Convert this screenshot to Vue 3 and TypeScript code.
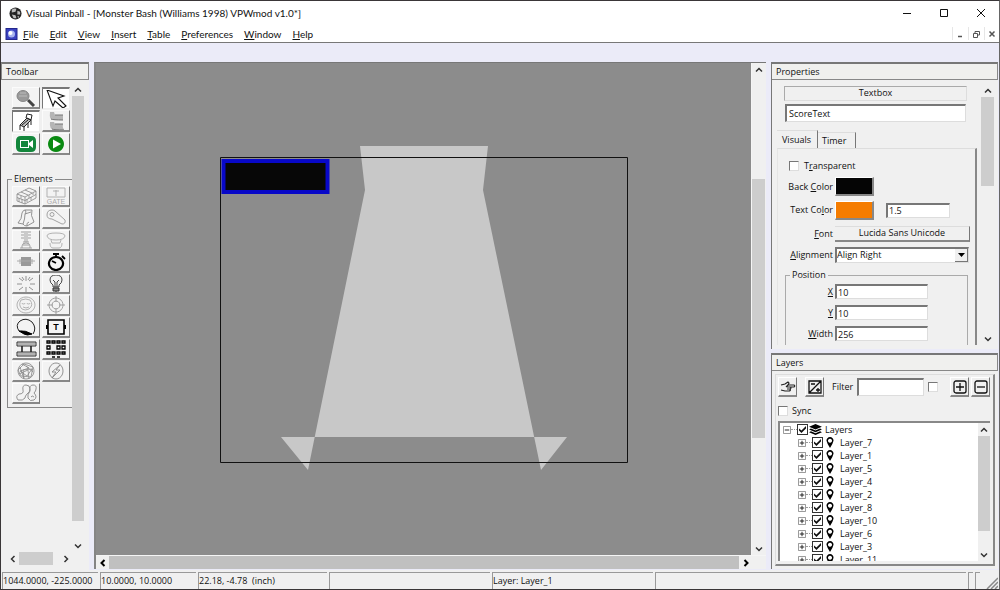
<script setup lang="ts">
import { ref } from 'vue'

interface Shape { d: string; fill?: string; stroke?: string; w?: number }
interface Tool { name: string; shapes: Shape[]; text?: string; small?: boolean; pressed?: boolean }
type Mnemonic = [string, string, string]

const menus: Mnemonic[] = [
  ['', 'F', 'ile'], ['', 'E', 'dit'], ['', 'V', 'iew'], ['', 'I', 'nsert'],
  ['', 'T', 'able'], ['', 'P', 'references'], ['', 'W', 'indow'], ['', 'H', 'elp'],
]

const modes: Tool[] = [
  { name: 'Magnify', shapes: [
    { d: 'M15 11L21 17', stroke: '#444', w: 3 },
    { d: 'M4 7a6 5.500 0 1 0 12 0a6 5.500 0 1 0-12 0', fill: '#999', stroke: '#888' },
    { d: 'M6 7h8M7 4h6', stroke: '#bbb' } ] },
  { name: 'Select', pressed: true, shapes: [
    { d: 'M4 0L21 6L15 8L23 16L20 18L12 11L10 16Z', fill: '#fff', stroke: '#111', w: 1.1 } ] },
  { name: 'Script', pressed: true, shapes: [
    { d: 'M7 12L14 5L18 7L11 14Z', fill: '#bbb', stroke: '#222' },
    { d: 'M14 1L19 2L18 7L13 5ZM7 12v5M11 14v4M18 7v5M15 10v5M9 12l6-5', stroke: '#222', w: 1, fill: 'none' } ] },
  { name: 'Backglass', shapes: [
    { d: 'M7 0h4l1 3h8v5H10q-4 0-3-8z', fill: '#b5b5b5' }, { d: 'M8 7q2 1 12 1M12 3h8', stroke: '#777' },
    { d: 'M7 10h4l1 2h8q-1 3 1 6H11q-5-1-4-8z', fill: '#b5b5b5' }, { d: 'M9 17q2 1 12 1M12 12h8', stroke: '#777' } ] },
  { name: 'Camera', shapes: [
    { d: 'M8 1h10q5 0 5 5v6q0 5-5 5H8q-5 0-5-5V6q0-5 5-5z', fill: '#13863b' },
    { d: 'M7 5h9v3l4-3v8l-4-3v3H7z', fill: '#fff' }, { d: 'M8 6h7v6H8z', fill: '#13863b' } ] },
  { name: 'Play', shapes: [
    { d: 'M13 1a8 8 0 1 0 .01 0z', fill: '#0a8a12' }, { d: 'M10 4.500L18 9L10 13.500Z', fill: '#fff' } ] },
]

const g = '#999'
const elements: Tool[] = [
  { name: 'Wall', shapes: [{ d: 'M4 7L16 1L23 4V11L12 17L4 14ZM4 7L12 10L23 4M12 10V17M4 10.500l8 3l11-6M8 8.500v3M16 8v3M20 6v2M14 12v3M18 10v3M6 11v4M9 12v4M8 5l7 3M12 3l7 3', stroke: '#888', w: 0.8 }] },
  { name: 'Gate', small: true, text: 'GATE', shapes: [{ d: 'M4 1h18v9H4zM13 3v6M10 4h6', stroke: '#aaa', w: 0.9 }] },
  { name: 'Ramp', shapes: [{ d: 'M5 14Q9 10 9 4Q10 1 12 1H19Q17 6 21 13L14 17Q11 17 10 15L5 14ZM12 1Q14 3 12 5Q12 10 10 15M12 5l6-2M14 17q-1-3 2-4', stroke: '#888', w: 0.9 }] },
  { name: 'Flipper', shapes: [{ d: 'M9 1Q4 1 4 6Q4 10 9 10L19 15Q23 15 22 11L12 2Q11 1 9 1ZM7 5.500a2 2 0 1 0 4 0a2 2 0 1 0-4 0', stroke: g, w: 0.9 }] },
  { name: 'Plunger', shapes: [{ d: 'M12 0v11M14 0v11M8 1h3M15 1h3M8 4h3M15 4h3M8 7h3M15 7h3M10 11h6M9 17v-2q0-3 4-3t4 3v2M7 17h12M10 14h6', stroke: g, w: 0.9 }] },
  { name: 'Bumper', shapes: [{ d: 'M4 5q0-3 9-3t9 3q-1 4-9 4T4 5zM8 9l1 3M18 9l-1 3M9 12h8M7 12q0 5 3 5h6q3 0 3-5', stroke: '#aaa', w: 0.9 }] },
  { name: 'Spinner', shapes: [{ d: 'M8 4h10v9H8z', fill: '#999' }, { d: 'M4 8h18M7 6v5M19 6v5', stroke: '#aaa', w: 1 }] },
  { name: 'Timer', shapes: [
    { d: 'M13 4a7 6.500 0 1 0 .01 0z', stroke: '#000', w: 2.2 }, { d: 'M10 1h6M13 1v3M19 3l3 3M13 10L9 8', stroke: '#000', w: 1.8 } ] },
  { name: 'Trigger', shapes: [{ d: 'M13 1v5M13 12v5M4 9h5M17 9h5M6 3l4 3M20 3l-4 3M6 15l4-3M20 15l-4-3M9 2l2 3M17 2l-2 3', stroke: '#888', w: 0.9 }] },
  { name: 'Light', shapes: [
    { d: 'M10 12v-2q-3-2-3-5q0-5 6-5t6 5q0 3-3 5v2zM10 5l2 2v5M16 5l-2 2v5', stroke: '#333', w: 0.9 },
    { d: 'M10 13h6v3h-6zM12 17h2', fill: '#888', stroke: '#333' } ] },
  { name: 'Kicker', shapes: [{ d: 'M13 1a9 8 0 1 0 .01 0zM8 4q5-2 9 0q4 5-1 9q-4 2-7 0q-4-4-1-9M9 7a1.500 1 0 1 0 3 0M14 7a1.500 1 0 1 0 3 0M10 11q3 2 6 0', stroke: '#aaa', w: 0.9 }] },
  { name: 'Target', shapes: [{ d: 'M13 2a7 7 0 1 0 .01 0zM13 5a4 4 0 1 0 .01 0zM13 0v6M13 12v6M4 9h6M16 9h6', stroke: g, w: 0.9 }] },
  { name: 'Decal', shapes: [
    { d: 'M6 13Q2 7 7 3Q13-1 19 4Q24 10 20 16', stroke: '#222', w: 1 },
    { d: 'M6 13Q12 12 19 16Q14 18 11 16Z', fill: '#000', stroke: '#000' } ] },
  { name: 'Textbox', text: 'T', shapes: [
    { d: 'M5 2h16v14H5z', stroke: '#000', w: 1.6 }, { d: 'M4 7v4M22 7v4', stroke: '#000', w: 2 } ] },
  { name: 'Reel', shapes: [
    { d: 'M4 2h19v4H4zM4 12h19v4H4z', fill: '#ddd', stroke: '#333', w: 1 },
    { d: 'M4 4h19M4 14h19', stroke: '#888', w: 1 },
    { d: 'M9 6v6M18 6v6', stroke: '#222', w: 1.6 } ] },
  { name: 'Light sequencer', shapes: [
    { d: 'M4 1h3v2H4zM9 1h3v2H9zM14 1h3v2h-3zM19 1h3v2h-3zM4 6h3v3H4zM14 6h3v3h-3zM19 6h3v3h-3zM4 12h3v2H4zM9 12h3v2H9zM14 12h3v2h-3zM19 12h3v2h-3zM9 17h3M14 17h3', stroke: '#000', w: 1.3 } ] },
  { name: 'Primitive', shapes: [
    { d: 'M13 1a8 8 0 1 0 .01 0zM9 2l7 4l-9 3l7 5l5-7l-9 1l1 8M5 8l6-6l9 3l-2 10l-10-1zM13 4l7 6M6 12l9-4l1 9M7 5l4 12', stroke: '#888', w: 0.8 } ] },
  { name: 'Flasher', shapes: [{ d: 'M13 1a7 8 0 1 0 .01 0zM17 3L9 10h4L9 16L17 8h-4Z', stroke: '#888', w: 0.9 }] },
  { name: 'Rubber', shapes: [
    { d: 'M5 16q-3-4 1-6q5 0 4-4q-1-5 3-5t4 4q0 3-3 5q-2 2-2 4q-2 3-7 2zM17 7q-1-6 3-6t3 4q0 2-2 4q4 4 0 7q-4 2-6-2q-1-3 2-7zM18 13q1-2 3 0', stroke: '#888', w: 0.9 } ] },
]

const layerList = ref(
  ['7', '1', '5', '4', '2', '8', '10', '6', '3', '11'].map((n) => ({ name: `Layer_${n}`, shown: true })),
)
const allShown = ref(true)
const position = ref([
  { id: 'px', key: 'X', rest: '', value: '10' },
  { id: 'py', key: 'Y', rest: '', value: '10' },
  { id: 'pw', key: 'W', rest: 'idth', value: '256' },
])
const elementName = ref('ScoreText')
const textScale = ref('1.5')
const filter = ref('')
</script>

<template>
  <div class="window">
    <header class="titlebar">
      <svg class="app-icon" viewBox="0 0 14 14" aria-hidden="true">
        <circle cx="7" cy="7" r="6.500" fill="#222" />
        <path d="M3 3q2-2 5-1l-1 3-4 1zM9 4l3 1 0 3-3 0zM3 8l4 1 1 3-3 0zM9 10l2 0-1 2z" fill="#bbb" />
      </svg>
      <h1>Visual Pinball - [Monster Bash (Williams 1998) VPWmod v1.0*]</h1>
      <div class="win-buttons">
        <button aria-label="Minimize"><svg viewBox="0 0 10 10"><path d="M1 5.500h8" /></svg></button>
        <button aria-label="Maximize"><svg viewBox="0 0 10 10"><path d="M1.500 1.500h7v7h-7z" /></svg></button>
        <button aria-label="Close"><svg viewBox="0 0 10 10"><path d="M1 1l8 8M9 1l-8 8" /></svg></button>
      </div>
    </header>

    <nav class="menubar">
      <svg class="doc-icon" viewBox="0 0 12 12" aria-hidden="true">
        <rect width="12" height="12" fill="#23268c" /><rect x="1" y="1" width="10" height="10" fill="#3a42c0" />
        <circle cx="6" cy="6" r="3.500" fill="#a9b4ee" /><circle cx="5" cy="5" r="2" fill="#fff" />
      </svg>
      <button v-for="m in menus" :key="m[1]">{{ m[0] }}<u>{{ m[1] }}</u>{{ m[2] }}</button>
      <div class="mdi-buttons">
        <button aria-label="Minimize table"><svg viewBox="0 0 10 10"><path d="M3 7.500h4" stroke-width="1.500" /></svg></button>
        <button aria-label="Restore table"><svg viewBox="0 0 10 10"><path d="M2.500 4.500h4v4h-4zM4 4V2.500h4.500V6H7" /></svg></button>
        <button aria-label="Close table"><svg viewBox="0 0 10 10"><path d="M2.500 2.500l5 5M7.500 2.500l-5 5" stroke-width="1.500" /></svg></button>
      </div>
    </nav>

    <div class="workspace">
      <aside class="dock toolbar">
        <h2>Toolbar</h2>
        <div class="tool-body">
          <div class="tool-main">
            <div class="tools">
              <div class="grid modes">
                <button v-for="t in modes" :key="t.name" :aria-label="t.name" :class="{ pressed: t.pressed }">
                  <svg viewBox="0 0 26 18"><path v-for="(s, i) in t.shapes" :key="i" :d="s.d" :fill="s.fill ?? 'none'" :stroke="s.stroke ?? 'none'" :stroke-width="s.w ?? 1" /></svg>
                </button>
              </div>
              <fieldset class="elements">
                <legend>Elements</legend>
                <div class="grid parts">
                  <button v-for="t in elements" :key="t.name" :aria-label="t.name">
                    <svg viewBox="0 0 26 18">
                      <path v-for="(s, i) in t.shapes" :key="i" :d="s.d" :fill="s.fill ?? 'none'" :stroke="s.stroke ?? 'none'" :stroke-width="s.w ?? 1" />
                      <text v-if="t.text" x="13" :y="t.small ? 17 : 12" text-anchor="middle" :class="t.small ? 'gate' : 'tee'">{{ t.text }}</text>
                    </svg>
                  </button>
                </div>
              </fieldset>
            </div>
            <div class="scroll vertical">
              <button aria-label="Scroll up"><svg viewBox="0 0 8 8"><path d="M1 5.500L4 2.500L7 5.500" /></svg></button>
              <div class="track"><div class="thumb tool-thumb"></div></div>
              <button aria-label="Scroll down"><svg viewBox="0 0 8 8"><path d="M1 2.500L4 5.500L7 2.500" /></svg></button>
            </div>
          </div>
          <div class="scroll horizontal">
            <button aria-label="Scroll left"><svg viewBox="0 0 8 8"><path d="M5.500 1L2.500 4L5.500 7" /></svg></button>
            <div class="track"><div class="thumb side-thumb"></div></div>
            <button aria-label="Scroll right"><svg viewBox="0 0 8 8"><path d="M2.500 1L5.500 4L2.500 7" /></svg></button>
          </div>
        </div>
      </aside>

      <main class="editor">
        <div class="editor-main">
          <svg class="canvas" role="img" aria-label="Table backglass">
            <polygon points="264,83 392,83 387,127 445,407 471,374 185,374 212,407 269,127" fill="#c8c8c8" fill-rule="evenodd" />
            <path d="M124.500 94.500H531.500V399.500H124.500Z" fill="none" stroke="#111" />
            <rect x="127.500" y="98" width="104" height="31" fill="#070707" stroke="#0808c8" stroke-width="4" />
          </svg>
          <div class="scroll vertical">
            <button aria-label="Scroll up"><svg viewBox="0 0 8 8"><path d="M1 5.500L4 2.500L7 5.500" /></svg></button>
            <div class="track"><div class="before"></div><div class="thumb editor-thumb"></div><div class="after"></div></div>
            <button aria-label="Scroll down"><svg viewBox="0 0 8 8"><path d="M1 2.500L4 5.500L7 2.500" /></svg></button>
          </div>
        </div>
        <div class="scroll horizontal">
          <button aria-label="Scroll left"><svg viewBox="0 0 8 8"><path d="M5.500 1L2.500 4L5.500 7" /></svg></button>
          <div class="track"><div class="thumb full"></div></div>
          <button aria-label="Scroll right"><svg viewBox="0 0 8 8"><path d="M2.500 1L5.500 4L2.500 7" /></svg></button>
        </div>
      </main>

      <aside class="right">
        <section class="dock properties">
          <h2>Properties</h2>
          <div class="prop-body">
            <div class="prop-main">
              <div class="kind">Textbox</div>
              <input v-model="elementName" class="field name" aria-label="Name" />
              <div class="tabs" role="tablist">
                <button role="tab" aria-selected="true" class="active">Visuals</button>
                <button role="tab" aria-selected="false">Timer</button>
              </div>
              <div class="pane">
                <div class="row check-row"><input id="tr" type="checkbox" /><label for="tr">T<u>r</u>ansparent</label></div>
                <div class="row"><label for="bc">Back <u>C</u>olor</label><button id="bc" class="swatch black" aria-label="Back color"></button></div>
                <div class="row tall"><label for="tc">Text Co<u>l</u>or</label><button id="tc" class="swatch orange" aria-label="Text color"></button><input v-model="textScale" class="field scale" aria-label="Text scale" /></div>
                <div class="row"><label for="fo"><u>F</u>ont</label><button id="fo" class="font-button">Lucida Sans Unicode</button></div>
                <div class="row"><label for="al"><u>A</u>lignment</label>
                  <div class="select"><select id="al"><option>Align Right</option><option>Align Left</option><option>Align Center</option></select><span><svg viewBox="0 0 7 4"><path d="M0 0h7L3.500 4z" /></svg></span></div>
                </div>
                <fieldset class="position">
                  <legend>Position</legend>
                  <div v-for="p in position" :key="p.id" class="pos-row">
                    <label :for="p.id"><u>{{ p.key }}</u>{{ p.rest }}</label><input :id="p.id" v-model="p.value" class="field" />
                  </div>
                </fieldset>
              </div>
            </div>
            <div class="scroll vertical">
              <button aria-label="Scroll up"><svg viewBox="0 0 8 8"><path d="M1 5.500L4 2.500L7 5.500" /></svg></button>
              <div class="track"><div class="thumb prop-thumb"></div></div>
              <button aria-label="Scroll down"><svg viewBox="0 0 8 8"><path d="M1 2.500L4 5.500L7 2.500" /></svg></button>
            </div>
          </div>
        </section>

        <section class="dock layers">
          <h2>Layers</h2>
          <div class="layer-body">
            <div class="layer-tools">
              <button aria-label="Assign to layer"><svg viewBox="0 0 16 16"><path d="M1 6L5 5L8 3L9 4L8 6H14Q15.500 7 14 8H10M10 8Q12 9 10 10M10 10Q11 11 9.500 12H5L1 11M7 8H10M7 10H10M8 6L6 8" fill="none" stroke="#222" stroke-width="1.200" /></svg></button>
              <button aria-label="Toggle all layers"><svg viewBox="0 0 16 16"><path d="M2 2h12v12H2zM2 14L14 2M4 5h4M9 11h4M11 9v4" fill="none" stroke="#111" stroke-width="1.300" /></svg></button>
              <label for="fi">Filter</label>
              <input id="fi" v-model="filter" class="field filter" />
              <input type="checkbox" aria-label="Case sensitive filter" />
              <button class="plus" aria-label="Add layer"><svg viewBox="0 0 16 16"><rect x="2" y="2" width="12" height="12" rx="2" fill="none" stroke="#111" stroke-width="1.300" /><path d="M4 8h8M8 4v8" stroke="#111" stroke-width="1.300" /></svg></button>
              <button aria-label="Remove layer"><svg viewBox="0 0 16 16"><rect x="2" y="2" width="12" height="12" rx="2" fill="none" stroke="#111" stroke-width="1.300" /><path d="M4 8h8" stroke="#111" stroke-width="1.300" /></svg></button>
            </div>
            <div class="sync"><input id="sy" type="checkbox" /><label for="sy">Sync</label></div>
            <div class="tree-box">
              <ul class="tree">
                <li class="root">
                  <button class="expander" aria-label="Collapse Layers"><svg viewBox="0 0 9 9"><path d="M.5.5h8v8h-8z" stroke="#888" /><path d="M2 4.500h5" stroke="#111" /></svg></button>
                  <i></i><input id="all" v-model="allShown" type="checkbox" />
                  <svg class="stack" viewBox="0 0 14 12"><path d="M7 0l7 3-7 3-7-3z" /><path d="M0 6l2-1 5 2 5-2 2 1-7 3zM0 9l2-1 5 2 5-2 2 1-7 3z" /></svg>
                  <label for="all">Layers</label>
                </li>
                <li v-for="l in layerList" :key="l.name">
                  <button class="expander" :aria-label="'Expand ' + l.name"><svg viewBox="0 0 9 9"><path d="M.5.5h8v8h-8z" stroke="#888" /><path d="M2 4.500h5M4.500 2v5" stroke="#111" /></svg></button>
                  <i></i><input :id="l.name" v-model="l.shown" type="checkbox" />
                  <svg class="pin" viewBox="0 0 8 11"><path fill-rule="evenodd" d="M4 0a3.500 3.500 0 0 1 3.500 3.800Q7 6.500 4 11Q1 6.500 .5 3.800A3.500 3.500 0 0 1 4 0zM4 1.700a2 2 0 1 0 .01 0z" /></svg>
                  <label :for="l.name">{{ l.name }}</label>
                </li>
              </ul>
              <div class="scroll vertical">
                <button aria-label="Scroll up"><svg viewBox="0 0 8 8"><path d="M1 5.500L4 2.500L7 5.500" /></svg></button>
                <div class="track"><div class="thumb tree-thumb"></div></div>
                <button aria-label="Scroll down"><svg viewBox="0 0 8 8"><path d="M1 2.500L4 5.500L7 2.500" /></svg></button>
              </div>
            </div>
          </div>
        </section>
      </aside>
    </div>

    <footer class="status">
      <span class="short">1044.0000, -225.0000</span>
      <span class="short">10.0000, 10.0000</span>
      <span class="medium">22.18, -4.78&nbsp; (inch)</span>
      <span class="long"></span>
      <span class="long">Layer: Layer_1</span>
      <span class="rest"></span>
      <span class="tiny"></span>
      <span class="tiny"></span>
      <svg class="grip" viewBox="0 0 12 12" aria-hidden="true"><path d="M1 12L12 1M5 12L12 5M9 12L12 9" /></svg>
    </footer>
  </div>
</template>

<style>
html, body { margin: 0; background: #ebebf8; }
</style>

<style scoped>
* { box-sizing: border-box; }
.window {
  display: flex; flex-direction: column; height: 100vh; overflow: hidden;
  border: 1px solid #3a3638; border-right-color: #666;
  background: #ebebf8; color: #111;
  font: 9px/12px "Open Sans", "Noto Sans", sans-serif;
}
button, input, select { font: inherit; color: inherit; margin: 0; padding: 0; border: 0; background: none; border-radius: 0; outline: 0; }
h1, h2 { margin: 0; font-size: 9px; font-weight: 400; white-space: nowrap; }
u { text-underline-offset: 1px; }
svg { display: block; flex: none; }
label { white-space: nowrap; }

.titlebar { display: flex; align-items: center; height: 24px; padding-left: 8px; background: #fff; flex: none; }
.titlebar h1 { font: 10px/12px Lato, "Open Sans", sans-serif; }
.app-icon { width: 13px; height: 13px; margin-right: 4px; }
.win-buttons { margin-left: auto; display: flex; }
.win-buttons button { width: 37px; height: 24px; display: grid; place-items: center; }
.win-buttons svg, .mdi-buttons svg { width: 10px; height: 10px; fill: none; stroke: #111; }
.mdi-buttons svg { stroke: #555; }

.menubar { display: flex; align-items: center; height: 18px; padding-left: 4px; background: #fff; border-bottom: 1px solid #777; flex: none; font: 10px/12px Lato, "Open Sans", sans-serif; }
.doc-icon { width: 13px; height: 12px; }
.menubar > button { padding: 0 6px 0 5px; }
.mdi-buttons { display: flex; margin-left: auto; gap: 1px; }
.mdi-buttons button { width: 15px; height: 13px; display: grid; place-items: center; border-left: 1px solid #e6e6e6; }

.workspace { flex: 1; min-height: 0; display: flex; padding: 19px 1px 0 0; gap: 5px; }
.dock { background: #f0f0f0; display: flex; flex-direction: column; min-height: 0; }
.dock h2 { height: 18px; line-height: 15px; padding-left: 4px; border: 1px solid #888; border-top: 2px solid #777; background: #f0f0ee; flex: none; }

.scroll { display: flex; flex: none; background: #f0f0f0; }
.scroll button { display: grid; place-items: center; flex: none; width: 13px; height: 13px; }
.scroll svg { width: 8px; height: 8px; fill: none; stroke: #333; stroke-width: 1.5; }
.vertical { flex-direction: column; width: 13px; }
.horizontal { height: 13px; }
.track { display: flex; flex: 1; min-height: 0; min-width: 0; }
.vertical .track { flex-direction: column; }
.thumb { background: #cdcdcd; }
.full { flex: 1; background: #c0c0c0; }
.tool-thumb { height: 96%; }
.side-thumb { width: 84%; }
.prop-thumb { height: 38%; }
.tree-thumb { height: 85%; }
.before { flex: 103; }
.editor-thumb { flex: 259; }
.after { flex: 104; }

.toolbar { width: 88px; flex: none; padding-bottom: 5px; }
.tool-body { flex: 1; min-height: 0; display: flex; flex-direction: column; padding: 3px 5px 0 5px; }
.tool-main { flex: 1; min-height: 0; display: flex; }
.tools { flex: 1; min-width: 0; padding-top: 4px; overflow: hidden; }
.toolbar .vertical { width: 12px; }
.toolbar .vertical button { width: 12px; }
.toolbar .horizontal { margin-right: 12px; }
.grid { display: grid; grid-template-columns: 28px 28px; gap: 1px 2px; }
.grid button { display: grid; place-items: center; border: 1px solid #fbfbfb; border-right-color: #777; border-bottom: 2px solid #888; background: #f3f3f3; overflow: hidden; }
.grid svg { width: 26px; height: 18px; }
.grid .pressed { background: #fff; border: 1px solid #777; border-top-width: 2px; border-right-color: #eee; border-bottom-color: #eee; }
.modes { margin-left: 6px; grid-auto-rows: 22px; }
.elements { margin: 18px -2px 0 1px; padding: 0 0 3px 4px; border: 1px solid #888; min-width: 0; }
.elements legend { padding: 0 2px; }
.parts { height: 218px; grid-auto-rows: 1fr; margin-top: 1px; }
.gate { font: 7px "Liberation Sans", sans-serif; fill: #aaa; }
.tee { font: bold 9px "Liberation Sans", sans-serif; fill: #000; }

.editor { flex: 1; min-width: 0; display: flex; flex-direction: column; background: #f0f0f0; border-left: 2px solid #858585; border-top: 1px solid #777; margin-bottom: 1px; }
.editor-main { flex: 1; min-height: 0; display: flex; border-bottom: 1px solid #f5f5f5; }
.canvas { flex: 1; min-width: 0; width: 100%; height: 100%; background: #8c8c8c; border-right: 1px solid #f5f5f5; }
.editor .vertical { margin-right: 1px; }
.editor .horizontal { margin-right: 14px; }
.editor .horizontal svg { stroke: #000; stroke-width: 2; }

.right { width: 227px; flex: none; display: flex; flex-direction: column; gap: 4px; }
.properties, .layers { border-left: 1px solid #777; }
.properties h2, .layers h2 { border-left: 0; }
.properties { flex: 287; }
.layers { flex: 216; margin-bottom: 1px; }
.prop-body { flex: 1; min-height: 0; display: flex; padding: 4px 4px 4px 5px; }
.prop-main { flex: 1; min-width: 0; min-height: 0; display: flex; flex-direction: column; padding-top: 2px; margin-right: 4px; overflow: hidden; }
.field { height: 15px; background: #fff; border: 1px solid #ddd; border-top: 2px solid #777; border-left: 2px solid #777; padding-left: 1px; min-width: 0; line-height: 11px; }
.kind { margin: 0 10px 0 7px; height: 15px; line-height: 12px; text-align: center; border: 1px solid #aaa; border-right-color: #ddd; border-bottom-color: #ddd; flex: none; }
.name { margin: 3px 11px 0 8px; height: 18px; flex: none; padding-left: 2px; }
.tabs { display: flex; align-items: flex-end; height: 26px; flex: none; }
.tabs button { height: 16px; padding: 0 9px 0 4px; border-right: 1px solid #777; border-top: 1px solid #ddd; }
.tabs .active { height: 18px; padding: 0 6px 0 5px; }
.pane { flex: 1; min-height: 0; border-top: 1px solid #ddd; border-right: 2px solid #888; border-left: 1px solid #e5e5e5; padding: 6px 5px 0 0; overflow: hidden; }
.row { display: grid; grid-template-columns: 55px auto auto 1fr; column-gap: 2px; align-items: center; height: 21px; }
.row > label, .pos-row label { text-align: right; }
.row.tall { height: 26px; }
.check-row { display: flex; gap: 5px; padding-left: 11px; }
.swatch { width: 39px; height: 19px; border: 1px solid #fff; border-right: 2px solid #888; border-bottom: 2px solid #888; }
.black { background: #050505; }
.orange { background: #f57c00; }
.scale { width: 64px; margin-left: 10px; }
.font-button { grid-column: 2 / -1; height: 16px; border-right: 1px solid #777; border-bottom: 2px solid #888; border-top: 1px solid #ddd; }
.select { grid-column: 2 / -1; position: relative; margin-right: 1px; }
select { display: block; appearance: none; width: 100%; height: 16px; background: #fff; border: 1px solid #ddd; border-top: 2px solid #777; border-left: 2px solid #777; line-height: 12px; }
.select span { position: absolute; right: 1px; top: 2px; bottom: 1px; width: 13px; display: grid; place-items: center; background: #f0f0f0; border-right: 1px solid #777; border-bottom: 1px solid #777; pointer-events: none; }
.select svg { width: 7px; height: 4px; }
.position { margin: 4px 2px 0 7px; padding: 0 39px 8px 0; border: 1px solid #aaa; min-width: 0; }
.position legend { margin-left: 4px; padding: 0 2px; line-height: 12px; }
.pos-row { display: grid; grid-template-columns: 47px 1fr; gap: 2px; align-items: center; height: 21px; }

input[type="checkbox"] { appearance: none; width: 10px; height: 10px; background: #fff; border: 1px solid #ddd; border-top-color: #777; border-left-color: #777; flex: none; }
.tree input[type="checkbox"] { width: 11px; height: 11px; border: 1px solid #333; }
input:checked::before { content: ""; display: block; width: 7px; height: 7px; margin: 1px; background: #111; clip-path: polygon(0 35%, 35% 65%, 100% 0, 100% 35%, 35% 100%, 0 65%); }

.layer-body { flex: 1; min-height: 0; display: flex; flex-direction: column; margin: 3px; padding: 2px 3px 3px 2px; border: 1px solid #ddd; border-right: 2px solid #888; border-bottom: 2px solid #888; }
.layer-tools { display: flex; align-items: center; height: 20px; flex: none; }
.layer-tools button { width: 19px; height: 20px; display: grid; place-items: center; border-right: 1px solid #777; border-bottom: 2px solid #888; border-top: 1px solid #fff; border-left: 1px solid #fff; margin-right: 2px; }
.layer-tools button + button { margin-left: 6px; }
.layer-tools .plus + button { margin: 0; }
.layer-tools svg { width: 16px; height: 16px; }
.layer-tools label { margin: 0 4px 0 6px; }
.filter { flex: 1; height: 18px; margin-right: 4px; }
.layer-tools .plus { margin-left: 12px; }
.sync { display: flex; align-items: center; gap: 4px; height: 24px; padding-top: 4px; flex: none; }
.tree-box { flex: 1; min-height: 0; display: flex; background: #fff; border-left: 2px solid #888; border-top: 2px solid #888; }
.tree-box .vertical { width: 12px; }
.tree-box .scroll button { width: 12px; }
.tree { flex: 1; min-width: 0; margin: 0; padding: 0 0 0 3px; list-style: none; overflow: hidden; }
.tree li { display: flex; align-items: center; height: 13px; padding-left: 15px; }
.tree .root { padding: 0; }
.expander svg { width: 8px; height: 8px; fill: #fff; }
.tree i { width: 6px; border-top: 1px dotted #999; }
.stack { width: 13px; height: 11px; margin: 0 3px 0 1px; }
.pin { width: 8px; height: 11px; margin: 0 6px 0 3px; }

.status { display: flex; gap: 2px; height: 19px; padding: 2px 1px 0; background: #f0f0f0; flex: none; }
.status span { border-left: 1px solid #999; border-top: 1px solid #999; line-height: 16px; white-space: pre; flex: none; }
.short { width: 96px; }
.medium { width: 129px; }
.long { width: 161px; }
.status .rest { flex: 1; }
.tiny { width: 5px; }
.grip { width: 12px; height: 12px; margin: 5px 0 0 4px; fill: none; stroke: #888; stroke-width: 1.5; }
</style>
